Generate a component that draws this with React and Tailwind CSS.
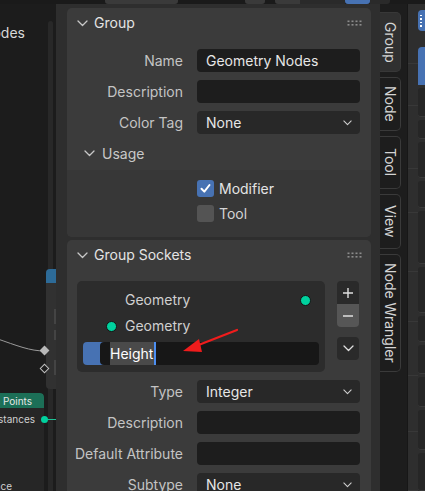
import React from 'react';

const Chevron = ({ color = '#c8c8c8', w = 11, h = 7 }) => (
  <svg width={w} height={h} viewBox="0 0 11 7">
    <path d="M1 1l4.5 4.5L10 1" fill="none" stroke={color} strokeWidth="1.3" strokeLinecap="round" strokeLinejoin="round" />
  </svg>
);

const Grip = () => (
  <svg width="16" height="6" viewBox="0 0 16 6">
    {[0, 1, 2, 3].map((c) =>
      [0, 1].map((r) => <rect key={`${c}-${r}`} x={c * 4 + 0.5} y={r * 3.5 + 0.5} width="2" height="1.6" fill="#8c8c8c" />)
    )}
  </svg>
);

const Field = ({ label, value, dropdown }) => (
  <div className="flex items-center h-[23px] pr-[11px]">
    <div className="w-[116px] shrink-0 text-right text-[#c4c4c4] whitespace-nowrap">{label}</div>
    <div
      className={`ml-[14px] flex-1 h-full rounded-[4px] flex items-center justify-between pl-[9px] pr-[8px] text-[#e6e6e6] ${
        dropdown ? 'bg-[#282828]' : 'bg-[#1d1d1d]'
      }`}
    >
      <span>{value}</span>
      {dropdown && <Chevron w={9} h={6} color="#d0d0d0" />}
    </div>
  </div>
);

const PanelHeader = ({ title }) => (
  <div className="flex items-center h-[30px] pl-[10px] pr-[8px]">
    <Chevron />
    <span className="ml-[6px] text-[#e4e4e4]">{title}</span>
    <div className="ml-auto">
      <Grip />
    </div>
  </div>
);

const Dot = () => <div className="w-[11px] h-[11px] rounded-full bg-[#00d19e] border border-[#141414]" />;

const Tab = ({ label, h, active }) => (
  <div
    className={`w-[21px] ${h} rounded-r-[5px] border border-l-0 flex items-center justify-center ${
      active ? 'bg-[#303030] border-[#383838]' : 'bg-[#1d1d1d] border-[#3a3a3a]'
    }`}
  >
    <span className="[writing-mode:vertical-rl] text-[#d4d4d4] whitespace-nowrap">{label}</span>
  </div>
);

const NodeEditor = () => (
  <div className="relative w-[56px] shrink-0 bg-[#1c1c1c] overflow-hidden">
    <span className="absolute right-[31px] top-[22px] whitespace-nowrap text-[#d8d8d8] text-[14px]">Geometry Nodes</span>
    <div className="absolute left-[48px] top-[17px] bottom-0 w-[5px] rounded-t-[3px] bg-[#282828]" />
    <svg className="absolute left-0 top-0" width="56" height="491">
      <path d="M-5 334 C 18 342, 30 347, 45 347" fill="none" stroke="#9a9a9a" strokeWidth="1" />
    </svg>
    <div className="absolute left-[46px] top-[265px] w-[20px] h-[120px] rounded-[4px] bg-[#313131] overflow-hidden">
      <div className="h-[14px] bg-[#2d6b98]" />
      <div className="ml-[8px] mt-[26px] w-[3px] h-[15px] bg-[#444]" />
      <div className="ml-[8px] mt-[6px] w-[3px] h-[10px] bg-[#444]" />
      <div className="ml-[8px] mt-[20px] w-[3px] h-[15px] bg-[#444]" />
    </div>
    <div className="absolute left-[41px] top-[343px] w-[7px] h-[7px] rotate-45 bg-[#b8b8b8]" />
    <div className="absolute left-[41px] top-[361px] w-[7px] h-[7px] rotate-45 border border-[#c0c0c0] bg-[#1c1c1c]" />
    <div className="absolute left-[-40px] top-[389px] w-[84px] bottom-0 bg-[#262626] rounded-tr-[4px] overflow-hidden">
      <div className="h-[15px] bg-[#1c6f57] rounded-tr-[4px] flex items-center justify-end pr-[12px] text-[10px] text-[#e6e6e6] whitespace-nowrap">
        Instance on Points
      </div>
    </div>
    <span className="absolute right-[21px] top-[410px] text-[10px] text-[#d0d0d0] whitespace-nowrap">Instances</span>
    <div className="absolute left-[44px] top-[414.5px] w-[12px] h-[1.5px] bg-[#1fc496]" />
    <div className="absolute left-[40.5px] top-[411.5px] w-[7px] h-[7px] rounded-full bg-[#00d19e]" />
    <span className="absolute right-[44px] top-[477px] text-[10px] text-[#d0d0d0] whitespace-nowrap">Distance</span>
  </div>
);

const Sidebar = () => (
  <div className="w-[324px] shrink-0 bg-[#2e2e2e] pl-[11px] pr-[9px] pt-[4px] flex flex-col gap-[3px] overflow-hidden">
    <div className="shrink-0 rounded-[5px] bg-[#3b3b3b] overflow-hidden">
      <PanelHeader title="Group" />
      <div className="flex flex-col gap-[8px] pt-[11px]">
        <Field label="Name" value="Geometry Nodes" />
        <Field label="Description" value="" />
        <Field label="Color Tag" value="None" dropdown />
      </div>
      <div className="mt-[3px] h-[33px] flex items-center pl-[17px]">
        <Chevron />
        <span className="ml-[7px] text-[#c8c8c8]">Usage</span>
      </div>
      <div className="bg-[#373737] pl-[130px] pt-[10px] pb-[15px] flex flex-col gap-[8px]">
        <div className="flex items-center h-[17px]">
          <div className="w-[17px] h-[17px] rounded-[3px] bg-[#4772b3] flex items-center justify-center">
            <svg width="13" height="13" viewBox="0 0 13 13">
              <path d="M2.5 6.8l2.8 2.8L10.5 3" fill="none" stroke="#fff" strokeWidth="2" strokeLinecap="round" strokeLinejoin="round" />
            </svg>
          </div>
          <span className="ml-[5px] text-[#e4e4e4]">Modifier</span>
        </div>
        <div className="flex items-center h-[17px]">
          <div className="w-[17px] h-[17px] rounded-[3px] bg-[#545454]" />
          <span className="ml-[5px] text-[#d4d4d4]">Tool</span>
        </div>
      </div>
    </div>

    <div className="shrink-0 flex-1 rounded-t-[5px] bg-[#3b3b3b]">
      <PanelHeader title="Group Sockets" />
      <div className="flex pt-[11px] pl-[10px] pr-[12px]">
        <div className="w-[248px] h-[91px] rounded-[5px] bg-[#2c2c2c] pt-[6px] px-[6px]">
          <div className="h-[26px] flex items-center pl-[42px] pr-[8px] text-[#d0d0d0]">
            <span>Geometry</span>
            <div className="ml-auto">
              <Dot />
            </div>
          </div>
          <div className="h-[26px] flex items-center pl-[23px] text-[#d0d0d0]">
            <Dot />
            <span className="ml-[8px]">Geometry</span>
          </div>
          <div className="mt-[3px] h-[23px] flex">
            <div className="w-[22px] h-full rounded-l-[4px] bg-[#4772b3]" />
            <div className="-ml-[5px] flex-1 h-full rounded-[4px] bg-[#171717] flex items-center pl-[10px]">
              <span className="h-full flex items-center bg-[#4a4a4a] text-white pr-[1px]">Height</span>
              <div className="w-[2px] h-full bg-[#4c8ef0]" />
            </div>
          </div>
        </div>
        <div className="ml-[12px] flex flex-col">
          <div className="w-[22px] h-[46px] rounded-[4px] overflow-hidden flex flex-col">
            <div className="h-[23px] bg-[#2a2a2a] flex items-center justify-center">
              <svg width="12" height="12" viewBox="0 0 12 12">
                <path d="M6 1v10M1 6h10" stroke="#e0e0e0" strokeWidth="1.4" />
              </svg>
            </div>
            <div className="h-[23px] bg-[#565656] flex items-center justify-center">
              <svg width="12" height="12" viewBox="0 0 12 12">
                <path d="M1 6h10" stroke="#e0e0e0" strokeWidth="1.4" />
              </svg>
            </div>
          </div>
          <div className="mt-[10px] w-[22px] h-[23px] rounded-[4px] bg-[#2a2a2a] flex items-center justify-center">
            <Chevron color="#e0e0e0" />
          </div>
        </div>
      </div>
      <div className="flex flex-col gap-[8px] pt-[8px]">
        <Field label="Type" value="Integer" dropdown />
        <Field label="Description" value="" />
        <Field label="Default Attribute" value="" />
        <Field label="Subtype" value="None" dropdown />
      </div>
    </div>
  </div>
);

const TabBar = () => (
  <div className="w-[27px] shrink-0 bg-[#1d1d1d] pt-[8px] flex flex-col gap-[5px]">
    <Tab label="Group" h="h-[60px]" active />
    <Tab label="Node" h="h-[54px]" />
    <Tab label="Tool" h="h-[53px]" />
    <Tab label="View" h="h-[55px]" />
    <Tab label="Node Wrangler" h="h-[118px]" />
  </div>
);

const FarRight = () => (
  <div className="flex-1 flex bg-[#2e2e2e] border-l-[1px] border-[#171717]">
    <div className="w-[10px] flex flex-col">
      {[61, 43, 64, 45, 60, 51, 55, 57, 60].map((h, i) => (
        <div key={i} style={{ height: h }} className="border-b border-[#383838]" />
      ))}
    </div>
    <div className="flex-1 pt-[6px] flex flex-col gap-[3px]">
      <div className="h-[22px] rounded-l-[4px] bg-[#4772b3] flex flex-col justify-center gap-[2px] pl-[2px]">
        <div className="w-[1.5px] h-[1.5px] bg-white" />
        <div className="w-[1.5px] h-[1.5px] bg-white" />
        <div className="w-[1.5px] h-[1.5px] bg-white" />
        <div className="w-[1.5px] h-[1.5px] bg-white" />
      </div>
      <div className="mt-[13px] h-[40px] rounded-tl-[4px] bg-[#4772b3]" />
      {[30, 20, 38, 28, 55, 48, 28, 30, 31, 42, 40].map((h, i) => (
        <div key={i} style={{ height: h }} className="rounded-l-[3px] bg-[#262626] border-b border-[#3a3a3a]" />
      ))}
    </div>
  </div>
);

export default function App() {
  return (
    <div className="relative w-[425px] h-[491px] overflow-hidden bg-[#1c1c1c] flex flex-col font-[family-name:Inter,'Noto_Sans',sans-serif] text-[14px] leading-none">
      <div className="h-[4px] shrink-0 bg-[#1a1a1a] flex">
        <div className="ml-[105px] w-[73px] bg-[#3a3a3a] rounded-b-[3px]" />
        <div className="ml-[67px] w-[20px] bg-[#3a3a3a] rounded-b-[3px]" />
        <div className="ml-[10px] w-[25px] bg-[#3a3a3a] rounded-bl-[3px]" />
        <div className="w-[45px] bg-[#2a2a2a]" />
        <div className="w-[25px] bg-[#4772b3] rounded-b-[3px]" />
        <div className="w-[20px] bg-[#2a2a2a] rounded-br-[3px]" />
      </div>
      <div className="flex-1 flex min-h-0">
        <NodeEditor />
        <Sidebar />
        <TabBar />
        <FarRight />
      </div>
      <svg className="absolute left-0 top-0 pointer-events-none" width="425" height="491">
        <path d="M237 330 L196 346" stroke="#f01c1c" strokeWidth="2.2" strokeLinecap="round" />
        <path d="M183 351 L199 339 L202 352 Z" fill="#f01c1c" />
      </svg>
    </div>
  );
}
